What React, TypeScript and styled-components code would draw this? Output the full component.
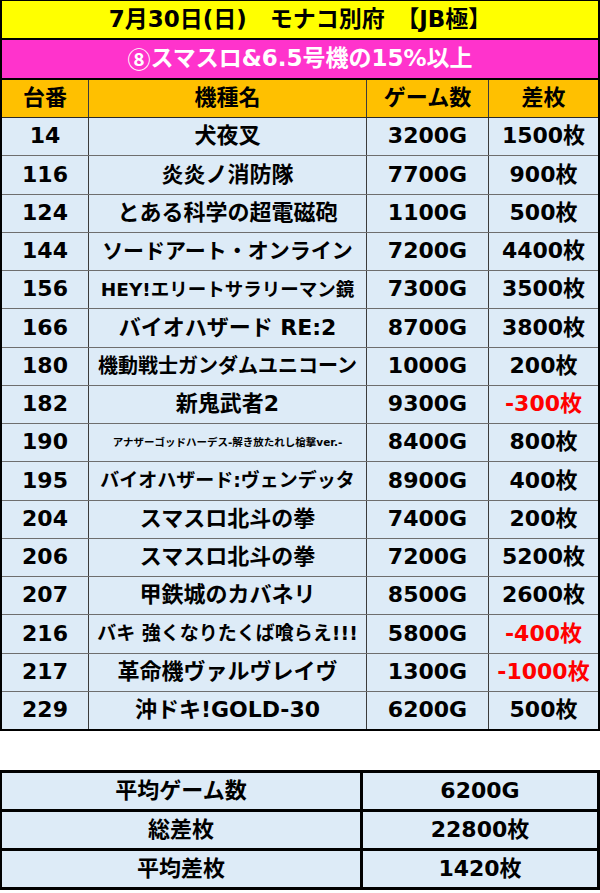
import React from "react";
import styled, { createGlobalStyle } from "styled-components";

const GlobalStyle = createGlobalStyle`
  html, body {
    margin: 0;
    padding: 0;
    background: #ffffff;
  }
  body {
    font-family: "DejaVu Sans", "Noto Sans CJK JP", sans-serif;
    font-weight: bold;
    color: #000;
  }
`;

const FONT = `"DejaVu Sans", "Noto Sans CJK JP", sans-serif`;

const Page = styled.div`
  width: 600px;
  display: flex;
  flex-direction: column;
`;

const Sheet = styled.div`
  width: 600px;
  box-sizing: border-box;
  border: 2px solid #000;
  border-top-width: 1px;
  display: flex;
  flex-direction: column;
`;

const Banner = styled.div<{ $bg: string; $color: string; $h: number }>`
  height: ${(p) => p.$h}px;
  box-sizing: border-box;
  background: ${(p) => p.$bg};
  color: ${(p) => p.$color};
  border-bottom: 2px solid #000;
  display: flex;
  align-items: center;
  justify-content: center;
  font-family: ${FONT};
  font-weight: bold;
  font-size: 23px;
  line-height: 1.2;
  white-space: pre;
`;

const Circled = styled.span`
  font-family: "Noto Sans CJK JP", sans-serif;
`;

const Row = styled.div<{ $header?: boolean }>`
  display: grid;
  grid-template-columns: 87px 278px 122px 1fr;
  height: ${(p) => (p.$header ? 38 : 38.25)}px;
  box-sizing: border-box;
  background: ${(p) => (p.$header ? "#FFC000" : "#DDEBF7")};
  border-bottom: 1px solid ${(p) => (p.$header ? "#2a2a2a" : "#6e6e6e")};
  &:last-child {
    border-bottom: none;
    height: 37.25px;
  }
`;

const Cell = styled.div<{ $size?: number; $red?: boolean }>`
  display: flex;
  align-items: center;
  justify-content: center;
  box-sizing: border-box;
  border-right: 1px solid #3c3c3c;
  font-family: ${FONT};
  font-weight: bold;
  font-size: ${(p) => p.$size ?? 22}px;
  line-height: 1.2;
  color: ${(p) => (p.$red ? "#FF0000" : "#000")};
  white-space: nowrap;
  overflow: hidden;
  &:last-child {
    border-right: none;
  }
`;

const Summary = styled.div`
  margin-top: 39px;
  width: 600px;
  box-sizing: border-box;
  border: 3px solid #000;
  border-left-width: 2px;
  display: flex;
  flex-direction: column;
`;

const SummaryRow = styled.div`
  display: grid;
  grid-template-columns: 361px 1fr;
  height: 39px;
  box-sizing: border-box;
  background: #DDEBF7;
  border-bottom: 3px solid #000;
  &:last-child {
    border-bottom: none;
    height: 36px;
  }
`;

const SummaryCell = styled.div`
  display: flex;
  align-items: center;
  justify-content: center;
  box-sizing: border-box;
  border-right: 3px solid #000;
  font-family: ${FONT};
  font-weight: bold;
  font-size: 22px;
  line-height: 1.2;
  &:last-child {
    border-right: none;
  }
`;

type Item = { no: string; name: string; games: string; diff: string; size?: number };

const items: Item[] = [
  { no: "14", name: "犬夜叉", games: "3200G", diff: "1500枚" },
  { no: "116", name: "炎炎ノ消防隊", games: "7700G", diff: "900枚" },
  { no: "124", name: "とある科学の超電磁砲", games: "1100G", diff: "500枚" },
  { no: "144", name: "ソードアート・オンライン", games: "7200G", diff: "4400枚", size: 21 },
  { no: "156", name: "HEY!エリートサラリーマン鏡", games: "7300G", diff: "3500枚", size: 18.5 },
  { no: "166", name: "バイオハザード RE:2", games: "8700G", diff: "3800枚" },
  { no: "180", name: "機動戦士ガンダムユニコーン", games: "1000G", diff: "200枚", size: 20 },
  { no: "182", name: "新鬼武者2", games: "9300G", diff: "-300枚" },
  { no: "190", name: "アナザーゴッドハーデス-解き放たれし槍撃ver.-", games: "8400G", diff: "800枚", size: 10.5 },
  { no: "195", name: "バイオハザード:ヴェンデッタ", games: "8900G", diff: "400枚", size: 19 },
  { no: "204", name: "スマスロ北斗の拳", games: "7400G", diff: "200枚" },
  { no: "206", name: "スマスロ北斗の拳", games: "7200G", diff: "5200枚" },
  { no: "207", name: "甲鉄城のカバネリ", games: "8500G", diff: "2600枚" },
  { no: "216", name: "バキ 強くなりたくば喰らえ!!!", games: "5800G", diff: "-400枚", size: 19 },
  { no: "217", name: "革命機ヴァルヴレイヴ", games: "1300G", diff: "-1000枚" },
  { no: "229", name: "沖ドキ!GOLD-30", games: "6200G", diff: "500枚" },
];

const summary = [
  { label: "平均ゲーム数", value: "6200G" },
  { label: "総差枚", value: "22800枚" },
  { label: "平均差枚", value: "1420枚" },
];

export default function App() {
  return (
    <Page>
      <GlobalStyle />
      <Sheet>
        <Banner $bg="#FFFF00" $color="#000" $h={39}>
          7月30日(日)　モナコ別府　【JB極】
        </Banner>
        <Banner $bg="#FF33CC" $color="#FFFFFF" $h={40}>
          <Circled>⑧</Circled>スマスロ&6.5号機の15%以上
        </Banner>
        <Row $header>
          <Cell>台番</Cell>
          <Cell>機種名</Cell>
          <Cell>ゲーム数</Cell>
          <Cell>差枚</Cell>
        </Row>
        {items.map((it) => (
          <Row key={it.no}>
            <Cell>{it.no}</Cell>
            <Cell $size={it.size}>{it.name}</Cell>
            <Cell>{it.games}</Cell>
            <Cell $red={it.diff.startsWith("-")}>{it.diff}</Cell>
          </Row>
        ))}
      </Sheet>
      <Summary>
        {summary.map((s) => (
          <SummaryRow key={s.label}>
            <SummaryCell>{s.label}</SummaryCell>
            <SummaryCell>{s.value}</SummaryCell>
          </SummaryRow>
        ))}
      </Summary>
    </Page>
  );
}
